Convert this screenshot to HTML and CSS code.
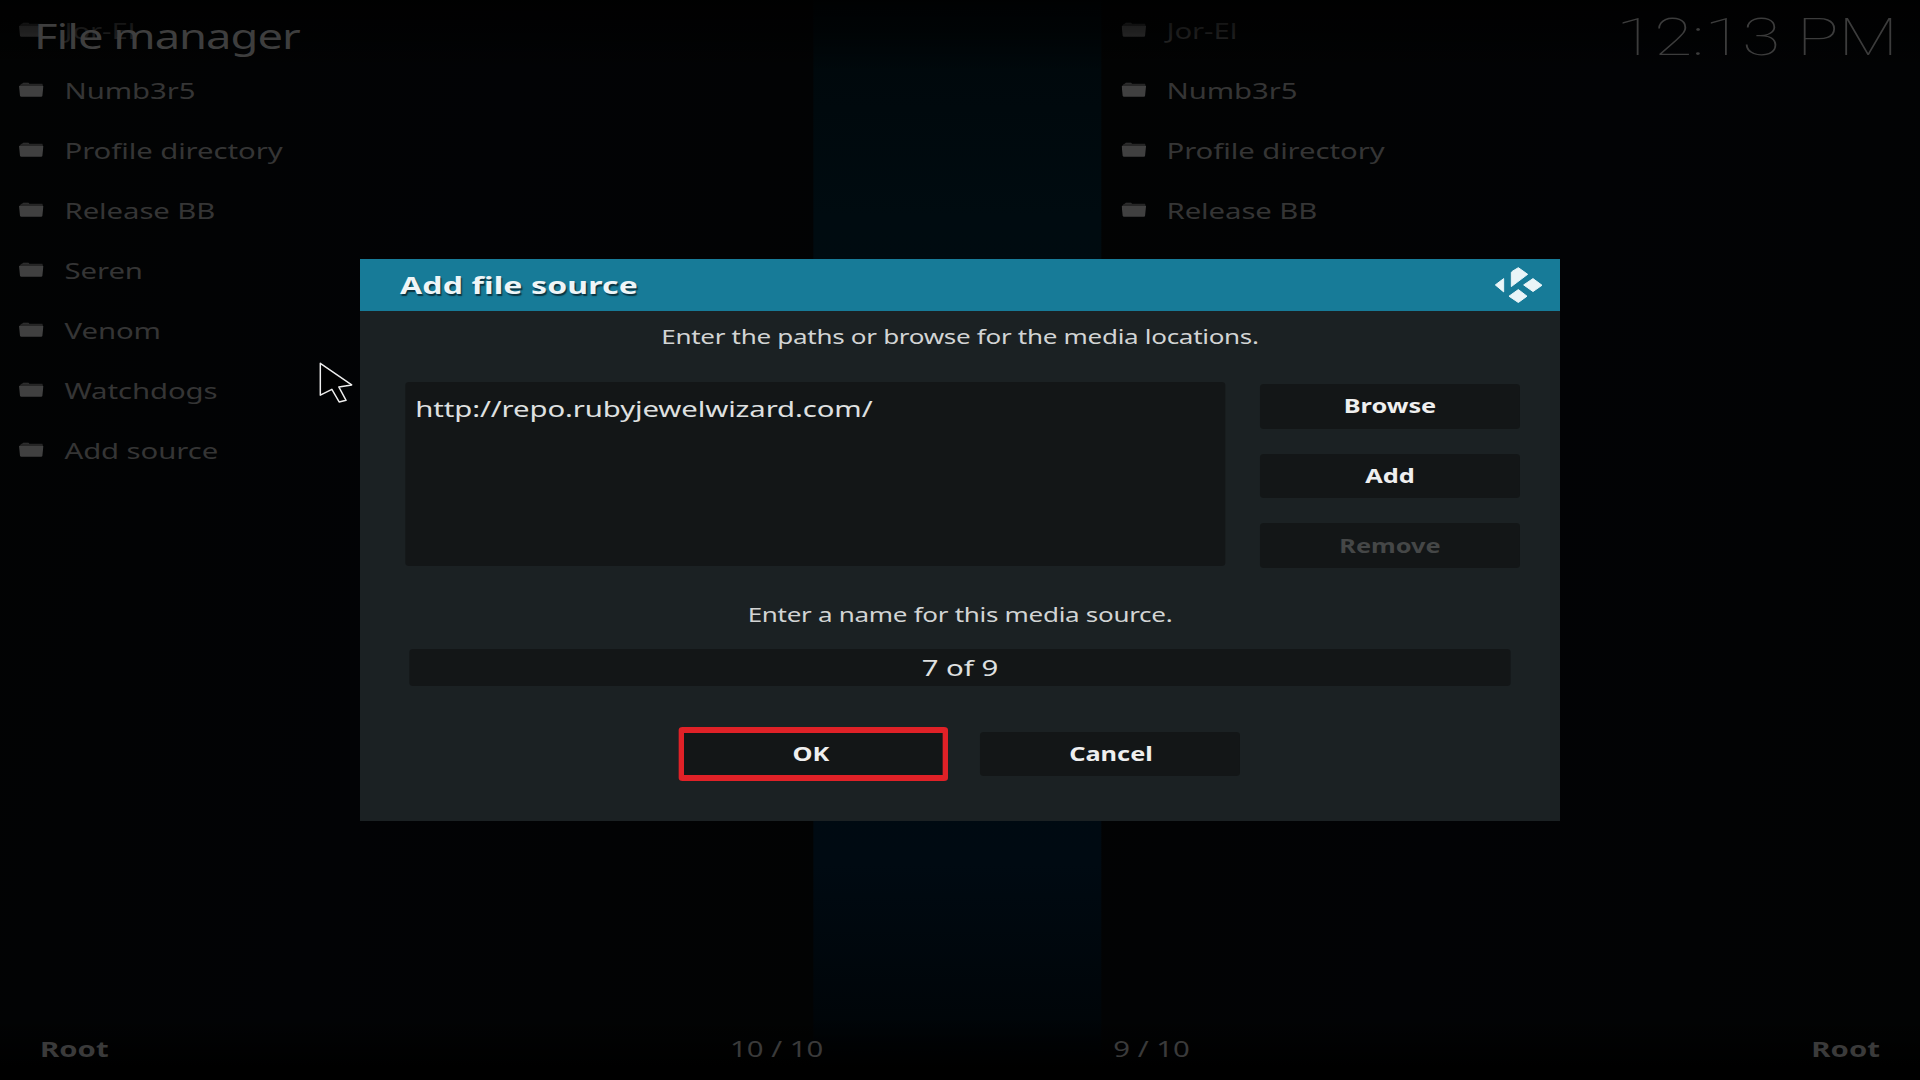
FILE: index.html
```
<!DOCTYPE html>
<html lang="en">
<head>
    <meta charset="utf-8">
    <title>File manager</title>
    <link rel="stylesheet" href="styles.css">
</head>
<body>
    <svg class="symbols" width="0" height="0">
        <symbol id="folder" viewBox="0 0 76 44" preserveAspectRatio="none">
            <path d="M2 12 L8 5 H72 L74 12 Z" fill="#262626"/>
            <path d="M11 5 Q11 2 15 2 H29 Q32 2 32 5 Z" fill="#3a3a3a"/>
            <path d="M1 12 H75 L72 40 Q72 43 68 43 H8 Q5 43 4 40 Z" fill="#404040"/>
        </symbol>
    </svg>

    <div id="screen">
        <main class="panels">
            <ul class="panel left">
                <li><svg><use href="#folder"/></svg><span>Jor-El</span></li>
                <li><svg><use href="#folder"/></svg><span>Numb3r5</span></li>
                <li><svg><use href="#folder"/></svg><span>Profile directory</span></li>
                <li><svg><use href="#folder"/></svg><span>Release BB</span></li>
                <li><svg><use href="#folder"/></svg><span>Seren</span></li>
                <li><svg><use href="#folder"/></svg><span>Venom</span></li>
                <li><svg><use href="#folder"/></svg><span>Watchdogs</span></li>
                <li><svg><use href="#folder"/></svg><span>Add source</span></li>
            </ul>
            <ul class="panel right">
                <li><svg><use href="#folder"/></svg><span>Jor-El</span></li>
                <li><svg><use href="#folder"/></svg><span>Numb3r5</span></li>
                <li><svg><use href="#folder"/></svg><span>Profile directory</span></li>
                <li><svg><use href="#folder"/></svg><span>Release BB</span></li>
            </ul>
        </main>

        <header class="topbar">
            <h1>File manager</h1>
            <div class="clock">12:13 PM</div>
        </header>

        <footer class="bottombar">
            <b>Root</b>
            <span class="count-left">10 / 10</span>
            <span class="count-right">9 / 10</span>
            <b>Root</b>
        </footer>

        <section class="dialog">
            <div class="dialog-header">
                <h2>Add file source</h2>
                <svg class="logo" viewBox="0 0 144 110" preserveAspectRatio="none">
                    <path d="M2 54 L27 35 V75 Z M50 17 Q50 15 53 13 L71 2 L99 22 L50 59 Z M87 54 L115 35 L142 55 L115 74 Z M43 88 L71 68 L97 88 L71 107 Z"/>
                </svg>
            </div>
            <p class="hint">Enter the paths or browse for the media locations.</p>
            <div class="paths">
                <div class="path-list">http://repo.rubyjewelwizard.com/</div>
                <div class="path-buttons">
                    <button>Browse</button>
                    <button>Add</button>
                    <button disabled>Remove</button>
                </div>
            </div>
            <p class="hint name-hint">Enter a name for this media source.</p>
            <div class="name-field">7 of 9</div>
            <div class="actions">
                <button class="selected">OK</button>
                <button class="cancel">Cancel</button>
            </div>
        </section>

        <svg class="cursor" viewBox="0 0 105 120" preserveAspectRatio="none">
            <path d="M5 4 L100 67 L61 73 L83 112 L62 117 L40 80 L5 97 Z"/>
        </svg>
    </div>
</body>
</html>
```
FILE: styles.css
```
* {
    box-sizing: border-box;
}
body {
    margin: 0;
    background: #020304;
    overflow: hidden;
    font-family: "Noto Sans", sans-serif;
}
h1, h2, p, ul {
    margin: 0;
    padding: 0;
    font-weight: normal;
}
.symbols {
    position: absolute;
}
/* 4:3 skin stretched to the full width */
#screen {
    position: relative;
    width: 1440px;
    height: 1080px;
    transform: scaleX(1.33333);
    transform-origin: 0 0;
    background: linear-gradient(#00070a, #000b10 20%, #000a12 80%, #000305);
}

.panels {
    display: grid;
    grid-template-columns: 610px 614.5px;
    justify-content: space-between;
    height: 1080px;
}
.panel {
    list-style: none;
    background: linear-gradient(100deg, #020303, #020305 50%, #020303);
}
.panel li {
    display: flex;
    align-items: center;
    height: 60px;
    padding-left: 14.3px;
    font-size: 22px;
    line-height: 58px;
    letter-spacing: -0.07px;
    color: #353535;
    white-space: nowrap;
}
.panel li svg {
    width: 18.8px;
    height: 15px;
    margin: 0 15.3px 1px 0;
}
.panel.right li {
    padding-left: 15.3px;
}

.topbar {
    position: absolute;
    top: 0;
    left: 0;
    right: 0;
    height: 72px;
    display: flex;
    justify-content: space-between;
    padding: 0 16.5px 0 25.5px;
    line-height: 72px;
    background: linear-gradient(rgba(0, 0, 0, 0.8), rgba(0, 0, 0, 0.5) 45%, rgba(0, 0, 0, 0));
}
.topbar h1 {
    font-size: 34px;
    letter-spacing: -0.75px;
    color: #3e3e3e;
}
.clock {
    font-family: Roboto, sans-serif;
    font-weight: 100;
    font-size: 52px;
    line-height: 75px;
    color: #3c3c3c;
}

.bottombar {
    position: absolute;
    left: 0;
    right: 0;
    bottom: 0;
    height: 62px;
    display: grid;
    grid-template-columns: 400px 187.5px 1fr auto;
    padding: 0 30px;
    font-size: 22px;
    line-height: 60px;
    color: #3a3a3a;
    background: linear-gradient(rgba(0, 0, 0, 0), #000 80%);
}
.count-left {
    text-align: right;
}
.count-right {
    padding-left: 217.5px;
}

.dialog {
    position: absolute;
    top: 259px;
    left: 270px;
    width: 900px;
    height: 562px;
    background: #1b2123;
    color: #dfe0e0;
}
.dialog-header {
    display: flex;
    justify-content: space-between;
    align-items: center;
    height: 52px;
    padding: 0 13.5px 0 30px;
    background: #177b98;
}
.dialog-header h2 {
    font-size: 24px;
    font-weight: bold;
    line-height: 50px;
    letter-spacing: 0.1px;
    padding-bottom: 1px;
    color: #eef5f7;
    text-shadow: 1px 2px 1px #0a3340;
}
.logo {
    width: 36px;
    height: 36.5px;
}
.logo path {
    fill: #eaf5f8;
    stroke: #eaf5f8;
    stroke-width: 3;
    stroke-linejoin: round;
}
.hint {
    height: 50px;
    font-size: 19.5px;
    line-height: 52px;
    letter-spacing: -0.22px;
    text-align: center;
    color: #d2d4d4;
}
.paths {
    display: flex;
    justify-content: space-between;
    padding: 21px 30px 0 34px;
}
.path-list {
    width: 615px;
    height: 184px;
    padding: 0 7.5px;
    border-radius: 3px;
    font-size: 22px;
    line-height: 53px;
    letter-spacing: -0.08px;
    background: #131617;
}
.path-buttons {
    display: flex;
    flex-direction: column;
    gap: 25px;
    padding-top: 2px;
}
button {
    width: 195px;
    height: 44.7px;
    padding: 0;
    border: none;
    border-radius: 3px;
    background: #131617;
    font: bold 19px "Noto Sans", sans-serif;
    color: #efefef;
}
button:disabled {
    color: #454747;
}
.name-hint {
    margin-top: 21px;
}
.name-field {
    width: 826px;
    height: 37px;
    margin: 10px auto 0;
    border-radius: 3px;
    font-size: 22px;
    line-height: 36px;
    text-align: center;
    background: #131617;
}
.actions {
    display: flex;
    justify-content: center;
    align-items: center;
    gap: 24px;
    margin-top: 41px;
    padding-right: 1.5px;
}
.actions .selected {
    width: 202px;
    height: 54px;
    padding-right: 3px;
    border: solid #e02127;
    border-width: 6px 4.5px;
}
.actions .cancel {
    padding-left: 2px;
}

.cursor {
    position: absolute;
    left: 238.8px;
    top: 362px;
    width: 26px;
    height: 41px;
}
.cursor path {
    fill: #000;
    stroke: #eee;
    stroke-width: 4.5;
    stroke-linejoin: round;
}
```
